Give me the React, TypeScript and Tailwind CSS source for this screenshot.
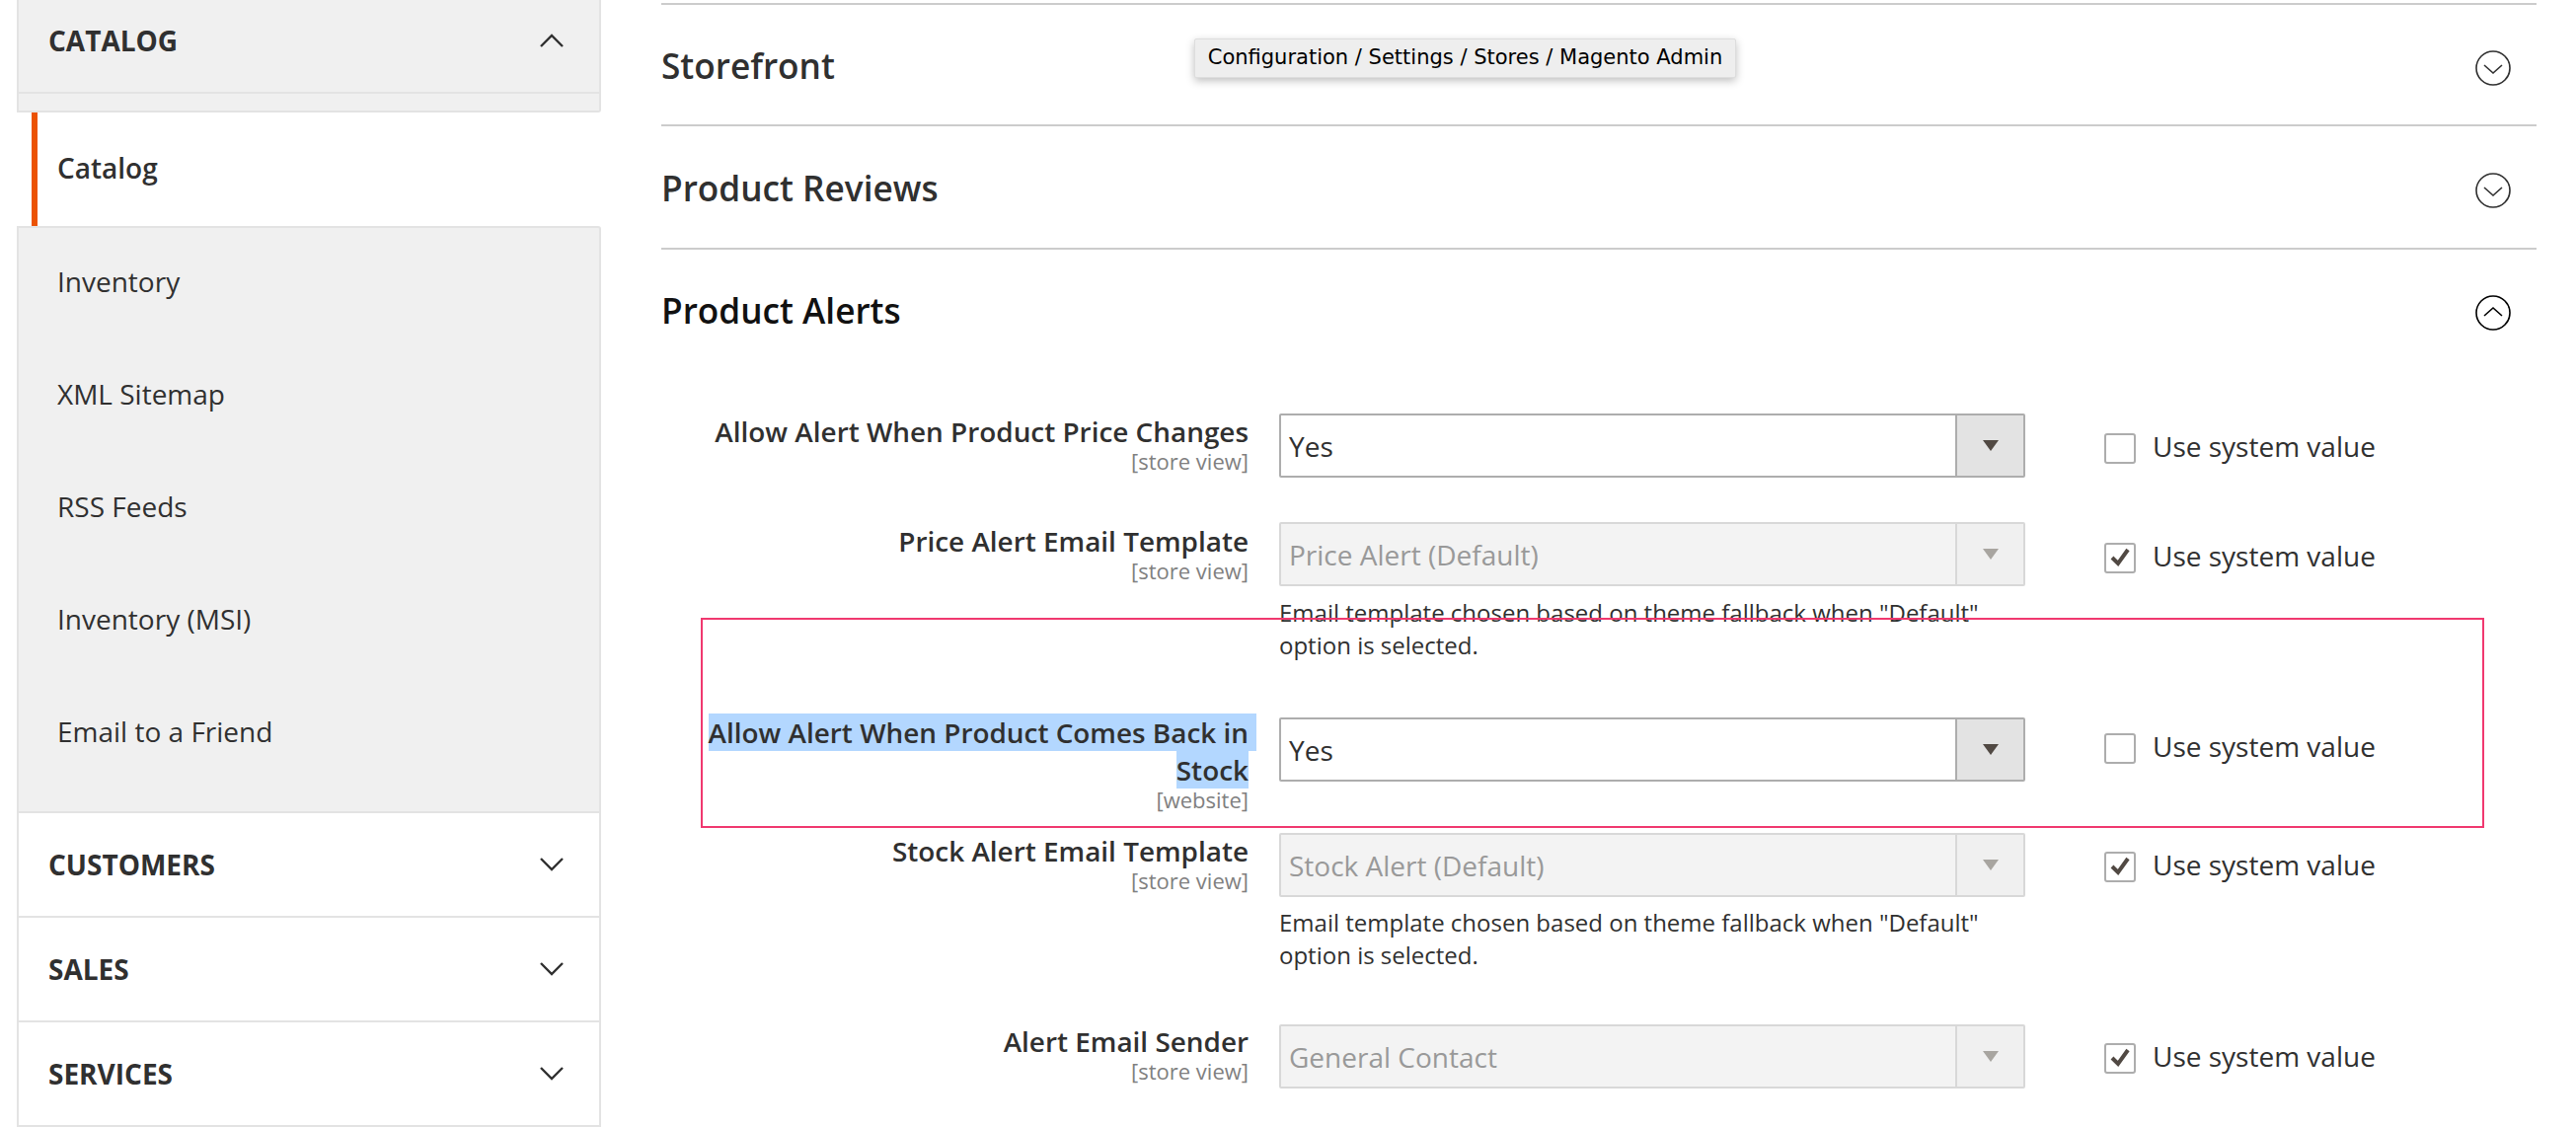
import React from 'react';

const font = { fontFamily: '"Open Sans", sans-serif' };

const menuItems = ['Inventory', 'XML Sitemap', 'RSS Feeds', 'Inventory (MSI)', 'Email to a Friend'];

const Chevron: React.FC<{ up?: boolean }> = ({ up }) => (
    <svg width="24" height="14" viewBox="0 0 24 14" fill="none" stroke="#303030" strokeWidth="2.4">
        <polyline points={up ? '1,13 12,2 23,13' : '1,1 12,12 23,1'} />
    </svg>
);

const CircleToggle: React.FC<{ up?: boolean }> = ({ up }) => (
    <svg width="36" height="36" viewBox="0 0 36 36" fill="none" stroke={up ? '#000000' : '#303030'} strokeWidth="1.6" className="mt-[7px] mr-[26px]">
        <circle cx="18" cy="18" r="17" />
        <polyline points={up ? '9,21 18,13 27,21' : '9,15 18,23 27,15'} />
    </svg>
);

const Section: React.FC<{ title: string; open?: boolean; className: string }> = ({ title, open, className }) => (
    <div className={`flex items-center justify-between border-t-2 border-[#cccccc] ${className}`}>
        <h2 className={`mt-px text-[35.2px] font-semibold ${open ? 'text-[#111111]' : 'text-[#303030]'}`}>{title}</h2>
        <CircleToggle up={open} />
    </div>
);

const FakeSelect: React.FC<{ value: string; disabled?: boolean }> = ({ value, disabled }) => (
    <div className={`flex h-[65px] w-[756px] rounded-[2px] border-2 ${disabled ? 'border-[#d8d8d8] bg-[#f3f3f3] text-[#999999]' : 'border-[#adadad] bg-white text-[#303030]'}`}>
        <div className="flex-1 pl-[8px] text-[28px] leading-[63px]">{value}</div>
        <div className={`flex w-[69px] items-center justify-center border-l-2 ${disabled ? 'border-[#d8d8d8] bg-[#f0f0f0]' : 'border-[#adadad] bg-[#e3e3e3]'}`}>
            <div className={`h-0 w-0 border-x-[8px] border-t-[11px] border-x-transparent ${disabled ? 'border-t-[#a8a5a0]' : 'border-t-[#514943]'}`} />
        </div>
    </div>
);

const UseSystem: React.FC<{ checked?: boolean; className: string }> = ({ checked, className }) => (
    <div className={`ml-[80px] flex items-center ${className}`}>
        <div className="flex h-[31px] w-[32px] items-center justify-center rounded-[3px] border-2 border-[#adadad] bg-white">
            {checked && (
                <svg width="22" height="20" viewBox="0 0 22 20" fill="none" stroke="#514943" strokeWidth="4">
                    <polyline points="3,10 9,16 19,2" />
                </svg>
            )}
        </div>
        <span className="-mt-[4px] ml-[17px] text-[28px] leading-[38px] text-[#303030]">Use system value</span>
    </div>
);

const Note: React.FC<{ className: string }> = ({ className }) => (
    <p className={`w-[756px] text-[24px] leading-[33px] text-[#303030] ${className}`}>
        Email template chosen based on theme fallback when "Default" option is selected.
    </p>
);

const Label: React.FC<{ title: string; scope?: string }> = ({ title, scope = '[store view]' }) => (
    <div className="ml-[35px] w-[560px] text-right">
        <div className="text-[27.9px] leading-[38px] font-semibold text-[#303030]">{title}</div>
        <div className="text-[22px] leading-[22px] text-[#808080]">{scope}</div>
    </div>
);

export default function App() {
    return (
        <div className="relative flex h-[1142px] w-[2610px] overflow-hidden bg-white" style={font}>
            {/* sidebar */}
            <aside className="ml-[17px] w-[592px] shrink-0 text-[#303030]">
                <div className="flex h-[95px] items-center justify-between border-x-2 border-b-2 border-[#e3e3e3] bg-[#f0f0f0] pr-[36px] pb-[12px] pl-[30px]">
                    <span className="text-[28px] font-bold">CATALOG</span>
                    <Chevron up />
                </div>
                <div className="h-[19px] rounded-br-[3px] border-x-2 border-b-2 border-[#e3e3e3] bg-[#f0f0f0]" />
                <div className="ml-[15px] flex h-[115px] items-center border-l-[6px] border-[#eb5202] pb-[3px] pl-[20px] text-[28px] font-semibold">
                    Catalog
                </div>
                <div className="rounded-tr-[3px] border-x-2 border-y-2 border-[#e3e3e3] bg-[#f0f0f0] pb-[21px]">
                    {menuItems.map(item => (
                        <div key={item} className="flex h-[114px] items-center pb-[6px] pl-[39px] text-[28px]">
                            {item}
                        </div>
                    ))}
                </div>
                {['CUSTOMERS', 'SALES', 'SERVICES'].map(name => (
                    <div key={name} className="flex h-[106px] items-center justify-between border-x-2 border-b-2 border-[#e3e3e3] pr-[36px] pl-[30px]">
                        <span className="text-[28px] font-bold">{name}</span>
                        <Chevron />
                    </div>
                ))}
            </aside>

            {/* config form */}
            <main className="mt-[3px] ml-[61px] w-[1900px]">
                <Section title="Storefront" className="h-[123px]" />
                <Section title="Product Reviews" className="h-[125px]" />
                <Section title="Product Alerts" open className="h-[123px]" />

                <div className="mt-[44px] flex items-start">
                    <Label title="Allow Alert When Product Price Changes" />
                    <div className="mt-px ml-[31px]"><FakeSelect value="Yes" /></div>
                    <UseSystem className="mt-[19px]" />
                </div>

                <div className="mt-[45px] flex items-start">
                    <Label title="Price Alert Email Template" />
                    <div className="ml-[31px]">
                        <FakeSelect value="Price Alert (Default)" disabled />
                        <Note className="mt-[10px]" />
                    </div>
                    <UseSystem checked className="mt-[19px]" />
                </div>

                <div className="mt-[53px] flex items-start">
                    <div className="ml-[35px] w-[560px] text-right">
                        <div className="text-[27.9px] leading-[38px] font-semibold text-[#303030]">
                            <div className="-mr-[8px] ml-auto w-fit bg-[#b3d7ff] pr-[8px]">Allow Alert When Product Comes Back in</div>
                            <div className="ml-auto w-fit bg-[#b3d7ff]">Stock</div>
                        </div>
                        <div className="text-[22px] leading-[22px] text-[#808080]">[website]</div>
                    </div>
                    <div className="mt-[4px] ml-[31px]"><FakeSelect value="Yes" /></div>
                    <UseSystem className="mt-[18px]" />
                </div>

                <div className="mt-[22px] flex items-start">
                    <Label title="Stock Alert Email Template" />
                    <div className="mt-px ml-[31px]">
                        <FakeSelect value="Stock Alert (Default)" disabled />
                        <Note className="mt-[9px]" />
                    </div>
                    <UseSystem checked className="mt-[18px]" />
                </div>

                <div className="mt-[52px] flex items-start">
                    <Label title="Alert Email Sender" />
                    <div className="mt-[2px] ml-[31px]"><FakeSelect value="General Contact" disabled /></div>
                    <UseSystem checked className="mt-[19px]" />
                </div>
            </main>

            {/* annotation overlays from the screenshot */}
            <div className="absolute top-[39px] left-[1210px] flex h-[40px] w-[549px] items-center justify-center rounded-[2px] border border-[#dddddd] bg-[#eeeeee] text-[21px] text-black shadow-[0_3px_8px_rgba(0,0,0,0.25)]" style={{ fontFamily: '"DejaVu Sans", sans-serif' }}>
                Configuration / Settings / Stores / Magento Admin
            </div>
            <div className="pointer-events-none absolute top-[626px] left-[710px] h-[213px] w-[1807px] border-2 border-[#f0386f]" />
        </div>
    );
}
